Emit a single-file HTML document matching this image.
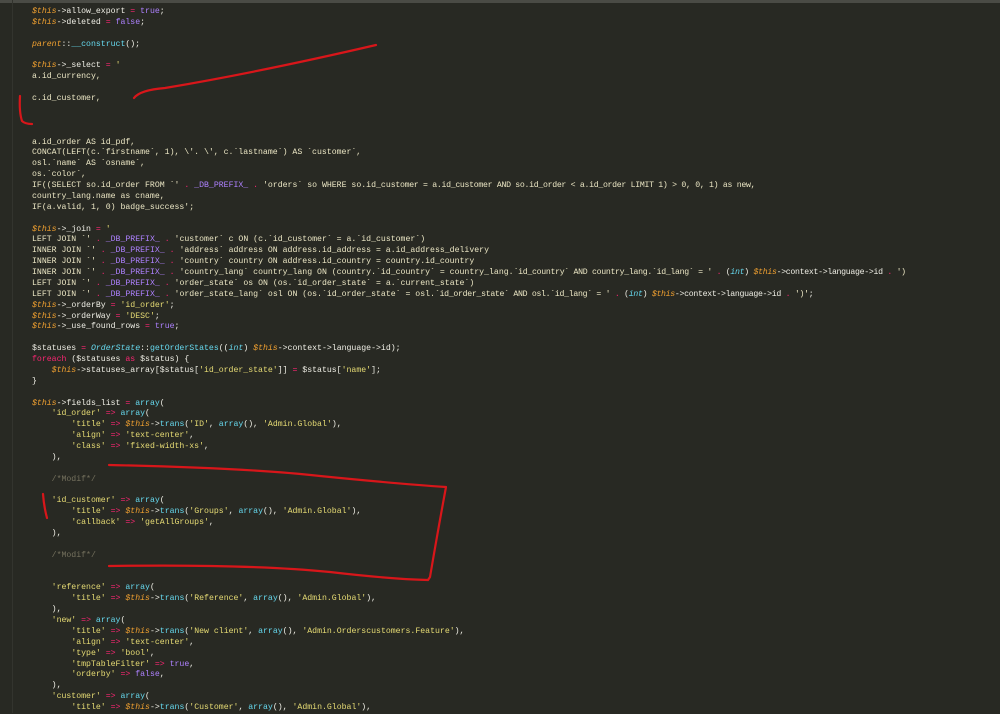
<!DOCTYPE html>
<html><head><meta charset="utf-8"><style>
html,body{margin:0;padding:0;background:#282923;width:1000px;height:713px;overflow:hidden}
.top{position:absolute;left:0;top:0;width:1000px;height:3px;background:#4a4b45}
.g{position:absolute;left:12px;top:0;width:1px;height:713px;background:#33342e}
pre{position:absolute;left:32px;top:7px;margin:0;font-family:"Liberation Mono",monospace;font-size:8.2px;line-height:10.88px;color:#f0efe6;white-space:pre}
.v{color:#f0a030;font-style:italic}.o{color:#f92672}.f{color:#66d9ef}.s{color:#e6db74}.p{color:#ae81ff}.c{color:#75715e}.t{color:#ebe6c4}.i{color:#66d9ef;font-style:italic}.r{color:#f92672}
.n{letter-spacing:-0.3px}
svg{position:absolute;left:0;top:0}
</style></head><body>
<div class="top"></div><div class="g"></div>
<pre><span class="v">$this</span>->allow_export <span class="o">=</span> <span class="p">true</span>;
<span class="v">$this</span>->deleted <span class="o">=</span> <span class="p">false</span>;

<span class="v">parent</span>::<span class="f">__construct</span>();

<span class="v">$this</span>->_select <span class="o">=</span> <span class="s">'</span>
<span class="t">a.id_currency,</span>

<span class="t">c.id_customer,</span>



<span class="t">a.id_order AS id_pdf,</span>
<span class="t">CONCAT(LEFT(c.`firstname`, 1), \'. \', c.`lastname`) AS `customer`,</span>
<span class="t">osl.`name` AS `osname`,</span>
<span class="t">os.`color`,</span>
<span class="t">IF((SELECT so.id_order FROM `'</span> <span class="o">.</span> <span class="p">_DB_PREFIX_</span> <span class="o">.</span> <span class="t">'orders` so WHERE so.id_cu<span class="n">stomer = a.id_customer AND so.id_order &lt; a.id_order LIMIT 1) &gt; 0, 0, 1) as new,</span></span>
<span class="t">country_lang.name as cname,</span>
<span class="t">IF(a.valid, 1, 0) badge_success';</span>

<span class="v">$this</span>->_join <span class="o">=</span> <span class="s">'</span>
<span class="t">LEFT JOIN `'</span> <span class="o">.</span> <span class="p">_DB_PREFIX_</span> <span class="o">.</span> <span class="t">'customer` c ON (c.`id_customer` = a.`id_customer`)</span>
<span class="t">INNER JOIN `'</span> <span class="o">.</span> <span class="p">_DB_PREFIX_</span> <span class="o">.</span> <span class="t">'address` address ON address.id_address = a.id_address_delivery</span>
<span class="t">INNER JOIN `'</span> <span class="o">.</span> <span class="p">_DB_PREFIX_</span> <span class="o">.</span> <span class="t">'country` country ON address.id_country = country.id_country</span>
<span class="t">INNER JOIN `'</span> <span class="o">.</span> <span class="p">_DB_PREFIX_</span> <span class="o">.</span> <span class="t">'country_lang` country_lang ON (country.`id_country` = country_lang.<span class="n">`id_country` AND country_lang.`id_lang` = '</span></span><span class="n"> <span class="o">.</span> (<span class="i">int</span>) <span class="v">$this</span>->context->language->id <span class="o">.</span> <span class="t">')</span></span>
<span class="t">LEFT JOIN `'</span> <span class="o">.</span> <span class="p">_DB_PREFIX_</span> <span class="o">.</span> <span class="t">'order_state` os ON (os.`id_order_state` = a.`current_state`)</span>
<span class="t">LEFT JOIN `'</span> <span class="o">.</span> <span class="p">_DB_PREFIX_</span> <span class="o">.</span> <span class="t">'order_state_lang` osl ON (os.`id_order_state` = osl.<span class="n">`id_order_state` AND osl.`id_lang` = '</span></span><span class="n"> <span class="o">.</span> (<span class="i">int</span>) <span class="v">$this</span>->context->language->id <span class="o">.</span> <span class="t">')'</span>;</span>
<span class="v">$this</span>->_orderBy <span class="o">=</span> <span class="s">'id_order'</span>;
<span class="v">$this</span>->_orderWay <span class="o">=</span> <span class="s">'DESC'</span>;
<span class="v">$this</span>->_use_found_rows <span class="o">=</span> <span class="p">true</span>;

$statuses <span class="o">=</span> <span class="i">OrderState</span>::<span class="f">getOrderStates</span>((<span class="i">int</span>) <span class="v">$this</span>->context->language->id);
<span class="r">foreach</span> ($statuses <span class="r">as</span> $status) {
    <span class="v">$this</span>->statuses_array[$status[<span class="s">'id_order_state'</span>]] <span class="o">=</span> $status[<span class="s">'name'</span>];
}

<span class="v">$this</span>->fields_list <span class="o">=</span> <span class="f">array</span>(
    <span class="s">'id_order'</span> <span class="o">=></span> <span class="f">array</span>(
        <span class="s">'title'</span> <span class="o">=></span> <span class="v">$this</span>-><span class="f">trans</span>(<span class="s">'ID'</span>, <span class="f">array</span>(), <span class="s">'Admin.Global'</span>),
        <span class="s">'align'</span> <span class="o">=></span> <span class="s">'text-center'</span>,
        <span class="s">'class'</span> <span class="o">=></span> <span class="s">'fixed-width-xs'</span>,
    ),

    <span class="c">/*Modif*/</span>

    <span class="s">'id_customer'</span> <span class="o">=></span> <span class="f">array</span>(
        <span class="s">'title'</span> <span class="o">=></span> <span class="v">$this</span>-><span class="f">trans</span>(<span class="s">'Groups'</span>, <span class="f">array</span>(), <span class="s">'Admin.Global'</span>),
        <span class="s">'callback'</span> <span class="o">=></span> <span class="s">'getAllGroups'</span>,
    ),

    <span class="c">/*Modif*/</span>


    <span class="s">'reference'</span> <span class="o">=></span> <span class="f">array</span>(
        <span class="s">'title'</span> <span class="o">=></span> <span class="v">$this</span>-><span class="f">trans</span>(<span class="s">'Reference'</span>, <span class="f">array</span>(), <span class="s">'Admin.Global'</span>),
    ),
    <span class="s">'new'</span> <span class="o">=></span> <span class="f">array</span>(
        <span class="s">'title'</span> <span class="o">=></span> <span class="v">$this</span>-><span class="f">trans</span>(<span class="s">'New client'</span>, <span class="f">array</span>(), <span class="s">'Admin.Orderscustomers.Feature'</span>),
        <span class="s">'align'</span> <span class="o">=></span> <span class="s">'text-center'</span>,
        <span class="s">'type'</span> <span class="o">=></span> <span class="s">'bool'</span>,
        <span class="s">'tmpTableFilter'</span> <span class="o">=></span> <span class="p">true</span>,
        <span class="s">'orderby'</span> <span class="o">=></span> <span class="p">false</span>,
    ),
    <span class="s">'customer'</span> <span class="o">=></span> <span class="f">array</span>(
        <span class="s">'title'</span> <span class="o">=></span> <span class="v">$this</span>-><span class="f">trans</span>(<span class="s">'Customer'</span>, <span class="f">array</span>(), <span class="s">'Admin.Global'</span>),
</pre>
<svg width="1000" height="713" viewBox="0 0 1000 713">
<g fill="none" stroke="#d8161a" stroke-width="2.2" stroke-linecap="round" stroke-linejoin="round">
<path d="M134,98 Q140,90 165,88 Q260,72 376,45"/>
<path d="M20,96 Q19,112 22,121 Q25,124 32,124"/>
<path d="M109,465 Q250,468 320,476 Q400,484 446,487 Q438,530 430,577 L428,580"/>
<path d="M109,566 Q250,564 330,572 Q390,579 428,580"/>
<path d="M43,494 Q44,507 47,518"/>
</g>
</svg>
</body></html>
